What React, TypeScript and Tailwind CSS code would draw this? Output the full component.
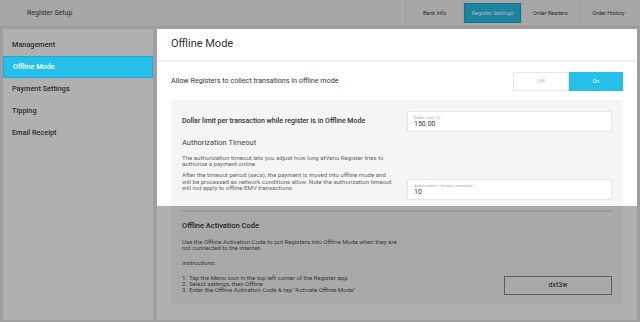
const tabs = ["Bank Info", "Register Settings", "Order Readers", "Order History"];
const menu = ["Management", "Offline Mode", "Payment Settings", "Tipping", "Email Receipt"];

function Field({ label, value }: { label: string; value: string }) {
  return (
    <div className="rounded-[2px] border border-[#e6e6e6] bg-white px-[6px] pt-[3px] pb-[2px]">
      <div className="text-[4px] leading-[5px] text-[#aaa]">{label}</div>
      <div className="text-[7px] leading-[9px] text-[#333]">{value}</div>
    </div>
  );
}

export default function App() {
  return (
    <div className="relative h-[322px] w-[640px] overflow-hidden bg-[#e6e6e6] font-['Roboto',sans-serif]">
      <header className="flex h-[27px] items-center border-b border-[#dddddd] bg-[#f2f2f2]">
        <div className="pl-[27px] text-[7px] text-[#444]">Register Setup</div>
        <nav className="ml-auto flex h-full items-center pr-[3px]">
          {tabs.map((t) => (
            <div key={t} className="flex h-full w-[58px] items-center justify-center border-l border-[#e4e4e4]">
              {t === "Register Settings" ? (
                <div className="flex h-[20px] w-[57px] items-center justify-center border border-[#1fa6cc] bg-[#25bfe9] text-[5.5px] text-white">
                  {t}
                </div>
              ) : (
                <span className="text-[5.5px] text-[#444]">{t}</span>
              )}
            </div>
          ))}
        </nav>
      </header>

      <div className="flex gap-[4px] px-[3px] pt-[2px]">
        <aside className="h-[291px] w-[150px] bg-white pt-[5px]">
          {menu.map((m) =>
            m === "Offline Mode" ? (
              <div key={m} className="relative z-20 flex h-[22px] items-center border border-[#1eaad4] bg-[#25bfe9] pl-[9px] text-[7.3px] font-medium text-white">
                {m}
              </div>
            ) : (
              <div key={m} className="flex h-[22px] items-center pl-[9px] text-[7.3px] font-medium text-[#444]">
                {m}
              </div>
            )
          )}
        </aside>

        <main className="h-[291px] flex-1 bg-white">
          <div className="relative z-20 bg-white">
            <div className="flex h-[33px] items-center border-b-2 border-[#f0f0f0] pl-[14px] text-[11px] text-[#333]">
              Offline Mode
            </div>
            <div className="flex h-[38px] items-center justify-between px-[14px]">
              <span className="text-[7.2px] text-[#333]">Allow Registers to collect transations in offline mode</span>
              <div className="flex h-[19px] w-[110px]">
                <div className="flex flex-1 items-center justify-center border border-[#e6e6e6] bg-white text-[5.5px] text-[#bbb]">Off</div>
                <div className="flex flex-1 items-center justify-center bg-[#25bfe9] text-[5.5px] text-white">On</div>
              </div>
            </div>
            <div className="mx-[14px] bg-[#f5f5f5] px-[11px] pt-[11px] pb-[6px]">
              <div className="grid grid-cols-[1fr_205px] gap-x-[12px]">
                <div className="flex items-center text-[7px] font-medium text-[#333]">
                  Dollar limit per transaction while register is in Offline Mode
                </div>
                <Field label="Dollar Limit ($)" value="150.00" />
                <div className="pt-[6px] pb-[9px]">
                  <div className="text-[7.5px] leading-[9px] text-[#444]">Authorization Timeout</div>
                  <p className="mt-[7.5px] text-[6.1px] leading-[6.3px] text-[#666]">
                    The authorization timeout lets you adjust how long atVenu Register tries to authorize a payment online.
                  </p>
                  <p className="mt-[5.4px] text-[6.1px] leading-[6.3px] text-[#666]">
                    After the timeout period (secs), the payment is moved into offline mode and will be processed as network conditions allow. Note the authorization timeout will not apply to offline EMV transactions.
                  </p>
                </div>
                <div className="self-end">
                  <Field label="Authorization Timeout (seconds) *" value="10" />
                </div>
              </div>
            </div>
          </div>

          <div className="mx-[14px] bg-[#f5f5f5] px-[11px] pt-[4px] pb-[10px]">
            <div className="flex items-end justify-between border-t-2 border-[#e0e0e0] pt-[9px]">
              <div>
                <div className="text-[7.5px] leading-[9px] font-medium text-[#333]">Offline Activation Code</div>
                <p className="mt-[8.5px] w-[218px] text-[6.1px] leading-[6.3px] text-[#555]">
                  Use the Offline Activation Code to put Registers into Offline Mode when they are not connected to the internet.
                </p>
                <p className="mt-[8.4px] text-[6.1px] leading-[6.3px] text-[#555]">Instructions:</p>
                <ol className="mt-[8.6px] text-[6.1px] leading-[6.3px] text-[#555]">
                  <li><span className="inline-block w-[7px]">1.</span>Tap the Menu icon in the top left corner of the Register app</li>
                  <li><span className="inline-block w-[7px]">2.</span>Select settings, then Offline</li>
                  <li><span className="inline-block w-[7px]">3.</span>Enter the Offline Activation Code &amp; tap "Activate Offline Mode"</li>
                </ol>
              </div>
              <div className="mb-[-1px] flex h-[19px] w-[108px] items-center justify-center border border-[#8a8a8a] text-[7px] text-[#222]">
                dxt3w
              </div>
            </div>
          </div>
        </main>
      </div>

      <div className="pointer-events-none absolute inset-0 z-10 bg-black/[0.31]" />
    </div>
  );
}
